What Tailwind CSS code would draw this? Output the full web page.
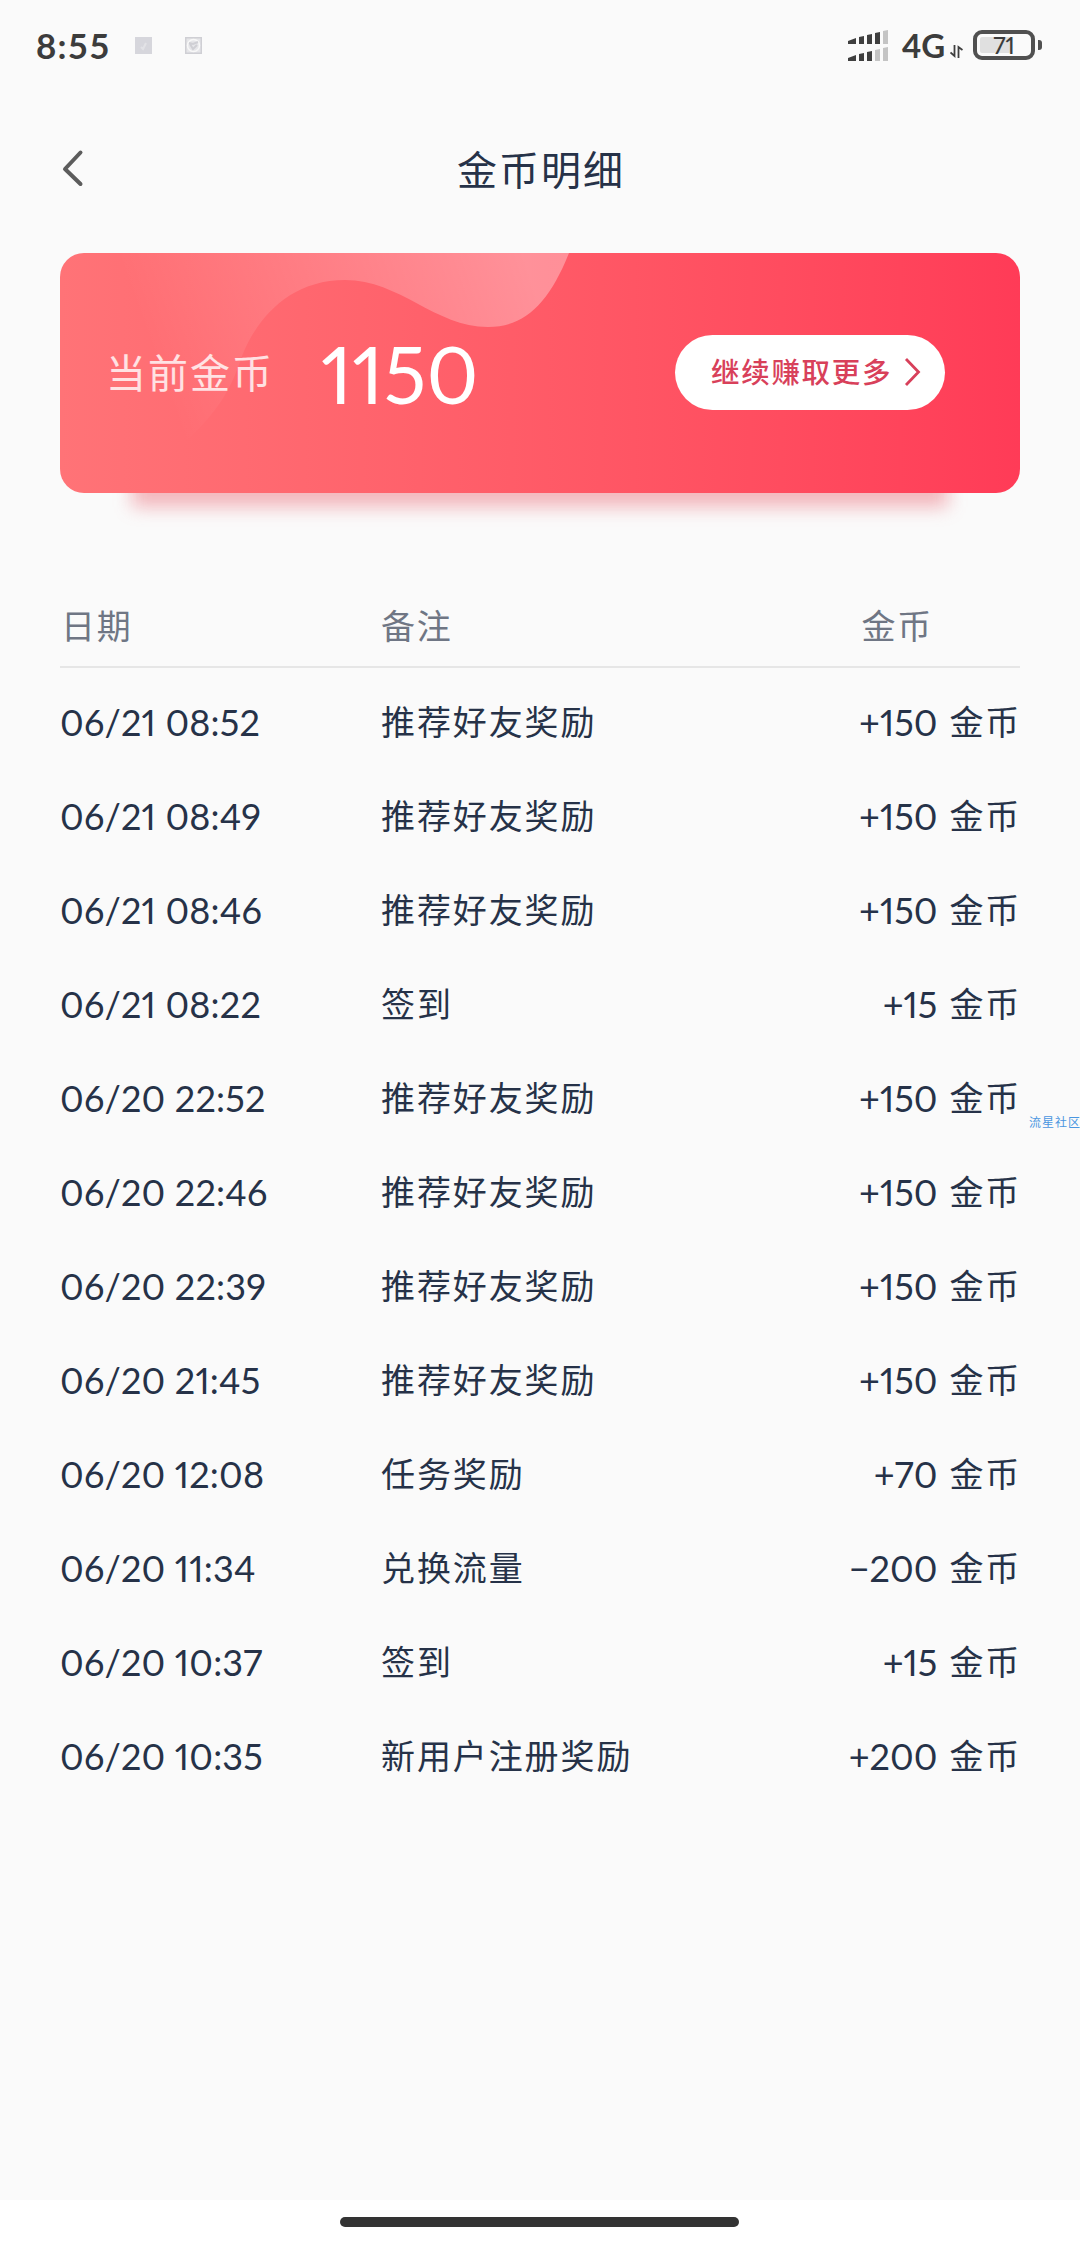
<!DOCTYPE html>
<html lang="zh-CN">
<head>
    <meta charset="UTF-8">
    <meta name="viewport" content="width=device-width, initial-scale=1.0">
    <title>金币明细</title>
    <script src="https://cdn.jsdelivr.net/npm/@tailwindcss/browser@4"></script>
</head>
<body class="bg-[#fafafa] font-[Lato,'Noto_Sans_CJK_SC',sans-serif] text-[#263248]">
    <div class="relative flex flex-col w-[1080px] h-[2244px] overflow-hidden">
        <!-- Status bar -->
        <div class="flex items-center h-[90px] pl-[36px] pr-[38px] text-[#3c3c3c]">
            <span class="text-[35px] font-bold leading-none tracking-[1.2px] w-[99px]">8:55</span>
            <svg class="w-[17px] h-[17px]" viewBox="0 0 17 17">
                <rect width="17" height="17" fill="#d6d6dc"/>
                <path d="M6 10l2 2 3-6" fill="none" stroke="#e2e2e6" stroke-width="2"/>
            </svg>
            <svg class="w-[17px] h-[17px] ml-[33px]" viewBox="0 0 17 17">
                <rect x=".75" y=".75" width="15.5" height="15.5" fill="#e6e6e9" stroke="#cfcfd4" stroke-width="1.5"/>
                <circle cx="8.5" cy="8.5" r="6" fill="none" stroke="#f8f8f8" stroke-width="1.5"/>
                <path d="M4 6l4 1 5-2M5 7l3 5 4-4" fill="none" stroke="#cfcfd4" stroke-width="2"/>
            </svg>
            <svg class="w-10 h-[31px] ml-auto" viewBox="0 0 40 31">
                <g fill="#3f3f3f">
                    <path d="M0 11l8-3v6H0zM11 7l5-1v8h-5zM19 5l5-1v10h-5zM27 3l5-1v12h-5z"/>
                    <path d="M0 28l8-3v6H0zM11 24l5-1v8h-5zM19 22l5-1v10h-5z"/>
                </g>
                <path d="M35 1l5-1v14h-5zM27 20l5-1v12h-5zM35 18l5-1v14h-5z" fill="#c4c4c4"/>
            </svg>
            <span class="ml-[14px] w-[46px] text-[33px] font-bold leading-none">4G</span>
            <svg class="w-[13px] h-[13px] ml-[2px] mt-[13px]" viewBox="0 0 13 13">
                <path d="M4.5 0v11L.5 7.500M8.500 13V2l4 3" fill="none" stroke="#3f3f3f" stroke-width="1.800"/>
            </svg>
            <div class="flex items-center ml-[10px]">
                <div class="relative w-[62px] h-[30px] border-4 border-[#505050] rounded-[9px] p-[3px]">
                    <div class="w-[31px] h-full bg-[#e0e0e0] rounded-[2px]"></div>
                    <span class="absolute inset-0 flex items-center justify-center text-[23px] font-medium leading-none proportional-nums">71</span>
                </div>
                <div class="w-1 h-[10px] ml-[3px] bg-[#505050] rounded-r-[3px]"></div>
            </div>
        </div>

        <!-- Header -->
        <div class="relative flex items-center justify-center h-[163px] pl-[2px]">
            <svg class="absolute left-[60px] top-[58px] w-6 h-[40px]" viewBox="0 0 24 40">
                <path d="M20.500 4.500L5 21l15.500 15" fill="none" stroke="#5c5c5c" stroke-width="4" stroke-linecap="round" stroke-linejoin="round"/>
            </svg>
            <h1 class="text-[40px] leading-none tracking-[2px] -mt-1">金币明细</h1>
        </div>

        <!-- Balance card -->
        <div class="relative mx-[60px] h-[240px] shrink-0">
            <div class="absolute left-[72px] right-[72px] bottom-[-14px] h-10 bg-[#e8505f]/40 blur-[9px]"></div>
            <div class="relative flex items-center h-full rounded-3xl overflow-hidden bg-linear-to-r from-[#ff7377] to-[#ff3b57] pl-[46px] pr-[75px]">
                <svg class="absolute inset-0 w-[960px] h-[240px]" viewBox="0 0 960 240">
                    <defs>
                        <linearGradient id="wave" gradientUnits="userSpaceOnUse" x1="470" y1="20" x2="110" y2="150">
                            <stop offset="0" stop-color="#fff" stop-opacity=".33"/>
                            <stop offset="1" stop-color="#fff" stop-opacity="0"/>
                        </linearGradient>
                    </defs>
                    <path d="M509 0C489 50 465 74 428 74C375 74 340 27 285 27C230 27 197 65 182 103C170 140 155 160 130 185L0 240V0Z" fill="url(#wave)"/>
                </svg>
                <span class="relative text-[40px] leading-none tracking-[2px] text-white/80">当前金币</span>
                <span id="balance" class="relative ml-[47px] text-[79px] leading-none text-white proportional-nums">1150</span>
                <button class="relative flex items-center w-[270px] h-[75px] ml-auto mb-[2px] bg-white rounded-full pl-[36px] text-[#d8405a]">
                    <span class="text-[28.500px] font-medium leading-none tracking-[1.700px]">继续赚取更多</span>
                    <svg class="w-[17px] h-[30px] ml-[12px]" viewBox="0 0 17 30">
                        <path d="M2 2l12.500 13L2 28" fill="none" stroke="currentColor" stroke-width="2.800"/>
                    </svg>
                </button>
            </div>
        </div>

        <!-- Records -->
        <div class="mx-[60px] mt-[93px]">
            <div class="flex items-center h-[82px] pb-[2px] pl-[1px] pr-[87px] border-b-2 border-[#e6e6e6] text-[34px] tracking-[1.800px] text-[#6f7684]">
                <span class="w-[320px]">日期</span>
                <span class="flex-1">备注</span>
                <span>金币</span>
            </div>
            <div id="records" class="pt-[7px]"></div>
        </div>

        <span class="absolute left-[1029px] top-[1117px] text-[12px] leading-none tracking-[1px] whitespace-nowrap text-[#4a96e0]">流星社区</span>

        <!-- Gesture bar -->
        <div class="flex justify-center h-11 mt-auto pt-[17px] pr-[2px] bg-white">
            <div class="w-[399px] h-[10px] rounded-full bg-[#333333]"></div>
        </div>
    </div>

    <script>
        const records = [
            ['06/21 08:52', '推荐好友奖励', '+150'],
            ['06/21 08:49', '推荐好友奖励', '+150'],
            ['06/21 08:46', '推荐好友奖励', '+150'],
            ['06/21 08:22', '签到', '+15'],
            ['06/20 22:52', '推荐好友奖励', '+150'],
            ['06/20 22:46', '推荐好友奖励', '+150'],
            ['06/20 22:39', '推荐好友奖励', '+150'],
            ['06/20 21:45', '推荐好友奖励', '+150'],
            ['06/20 12:08', '任务奖励', '+70'],
            ['06/20 11:34', '兑换流量', '−200'],
            ['06/20 10:37', '签到', '+15'],
            ['06/20 10:35', '新用户注册奖励', '+200']
        ];

        document.getElementById('records').innerHTML = records
            .map(([date, note, amount]) => `
                <div class="flex items-center h-[94px] leading-none">
                    <span class="w-[321px] text-[36px] tracking-[0.200px] proportional-nums">${date}</span>
                    <span class="flex-1 text-[34px] tracking-[1.900px]">${note}</span>
                    <span class="text-[36px] proportional-nums">${amount}</span>
                    <span class="ml-[12px] -mr-[1px] text-[34px] tracking-[1.800px]">金币</span>
                </div>
            `)
            .join('');
    </script>
</body>
</html>
